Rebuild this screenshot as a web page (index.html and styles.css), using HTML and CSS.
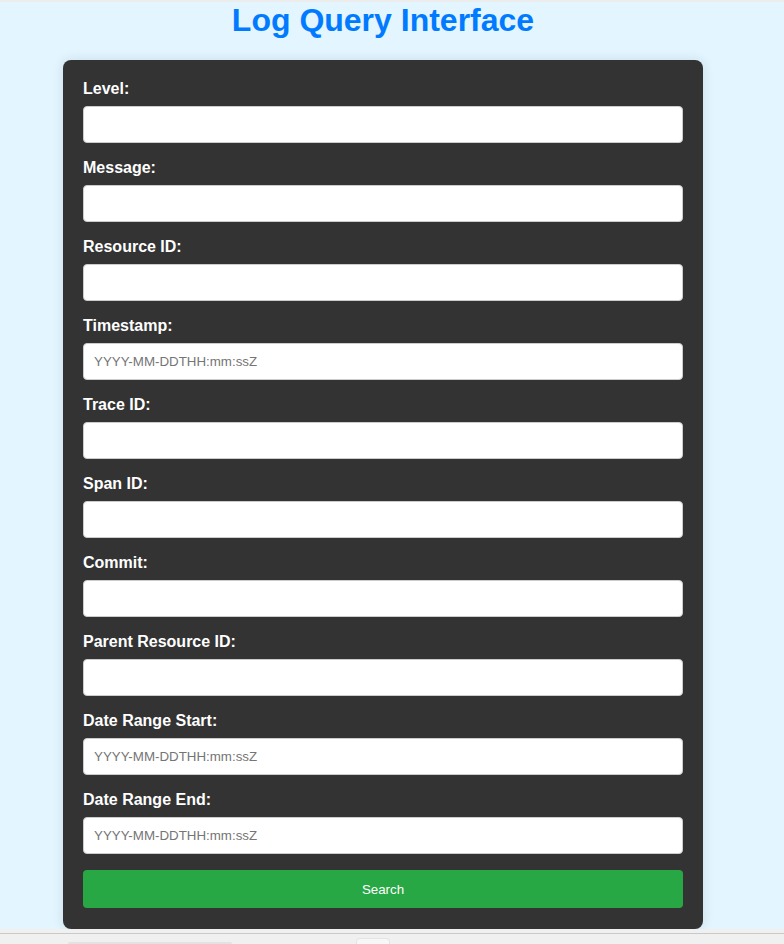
FILE: index.html
```html
<!DOCTYPE html>
<html>
<head>
<meta charset="utf-8">
<title>Log Query Interface</title>
<link rel="stylesheet" href="styles.css">
</head>
<body>
<div class="topline"></div>
<div class="page">
  <h1 class="title">Log Query Interface</h1>
  <form class="card">
    <label class="lbl">Level:</label>
    <input class="field" type="text">
    <label class="lbl">Message:</label>
    <input class="field" type="text">
    <label class="lbl">Resource ID:</label>
    <input class="field" type="text">
    <label class="lbl">Timestamp:</label>
    <input class="field" type="text" placeholder="YYYY-MM-DDTHH:mm:ssZ">
    <label class="lbl">Trace ID:</label>
    <input class="field" type="text">
    <label class="lbl">Span ID:</label>
    <input class="field" type="text">
    <label class="lbl">Commit:</label>
    <input class="field" type="text">
    <label class="lbl">Parent Resource ID:</label>
    <input class="field" type="text">
    <label class="lbl">Date Range Start:</label>
    <input class="field" type="text" placeholder="YYYY-MM-DDTHH:mm:ssZ">
    <label class="lbl">Date Range End:</label>
    <input class="field" type="text" placeholder="YYYY-MM-DDTHH:mm:ssZ">
    <button class="btn" type="button">Search</button>
  </form>
</div>
<div class="bottombar">
  <div class="bb-line"></div>
  <div class="bb-pill"></div>
  <div class="bb-tab"></div>
</div>
</body>
</html>
```

FILE: styles.css
```css
html, body {
  margin: 0;
  padding: 0;
}
body {
  background: #e3f5fe;
  font-family: "Liberation Sans", Arial, sans-serif;
  height: 944px;
  overflow: hidden;
}
.topline {
  height: 2px;
  background: #ececec;
}
.page {
  width: 766px;
  display: flex;
  flex-direction: column;
  align-items: center;
}
.title {
  margin: 0 0 21px 0;
  height: 37px;
  line-height: 37px;
  font-size: 32px;
  font-weight: bold;
  color: #007bff;
  text-align: center;
}
.card {
  width: 600px;
  padding: 20px 20px 21px 20px;
  background: #333333;
  border-radius: 8px;
  box-shadow: 0 0 12px rgba(0, 60, 100, 0.12);
  display: flex;
  flex-direction: column;
}
.lbl {
  display: block;
  height: 18px;
  line-height: 18px;
  margin-bottom: 8px;
  font-size: 16px;
  font-weight: bold;
  color: #ffffff;
}
.field {
  box-sizing: border-box;
  width: 600px;
  height: 37px;
  margin: 0 0 16px 0;
  padding: 0 10px;
  border: 1px solid #cccccc;
  border-radius: 4px;
  background: #ffffff;
  font-family: "Liberation Sans", Arial, sans-serif;
  font-size: 13.33px;
  color: #222;
  outline: none;
}
.field::placeholder {
  color: #757575;
}
.btn {
  width: 600px;
  height: 38px;
  margin-top: 0;
  border: none;
  border-radius: 4px;
  background: #28a745;
  color: #ffffff;
  font-family: "Liberation Sans", Arial, sans-serif;
  font-size: 13.33px;
  cursor: pointer;
}
.bottombar {
  position: fixed;
  left: 0;
  top: 929px;
  width: 784px;
  height: 15px;
  background: #f0f0f0;
}
.bb-line {
  position: absolute;
  left: 0;
  top: 4px;
  width: 784px;
  height: 1px;
  background: #c9c9c9;
}
.bb-pill {
  position: absolute;
  left: 68px;
  top: 13px;
  width: 164px;
  height: 2px;
  background: #e2e2e2;
  border-radius: 2px 2px 0 0;
}
.bb-tab {
  position: absolute;
  left: 356px;
  top: 9px;
  width: 32px;
  height: 6px;
  background: #f7f7f7;
  border: 1px solid #e4e4e4;
  border-bottom: none;
  border-radius: 4px 4px 0 0;
}
```
